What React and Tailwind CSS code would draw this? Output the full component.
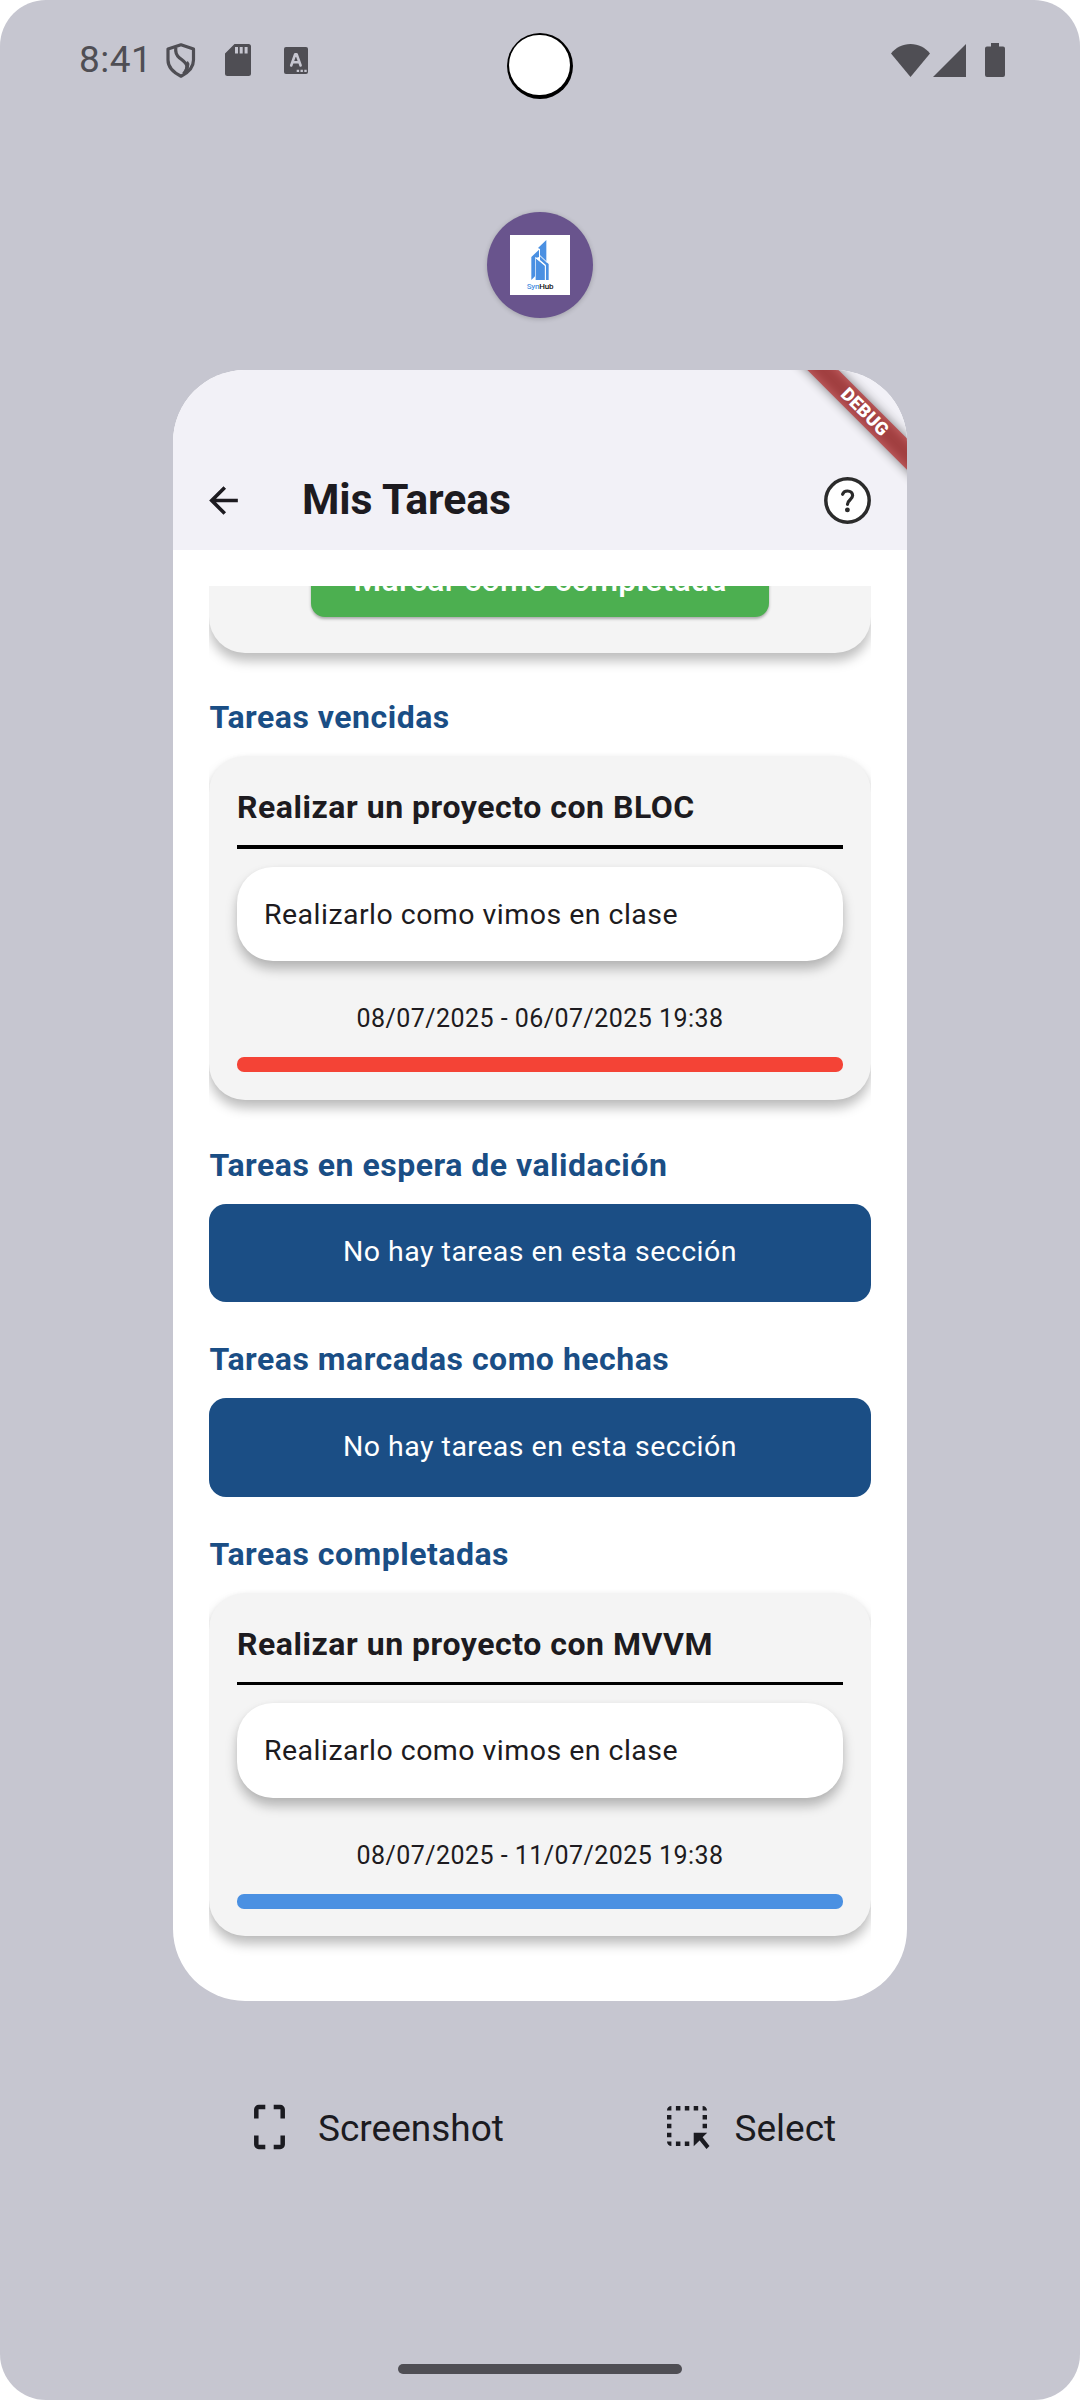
import React from "react";

function ShieldIcon() {
  return (
    <svg className="h-[35px] w-[30px]" viewBox="0 0 30 35" fill="none" stroke="#4f4e54" strokeWidth="3.2" strokeLinejoin="round">
      <path d="M15 1.8 27.5 6v11c0 7.200-6 13-12.500 16.200C8.500 30 2 24.200 2 17V6Z" />
      <path d="M9.800 4.500c-.6 4.500.4 7.600 3.500 10.200 4 3.300 7.500 5 7.700 9 .1 2.300-1.200 4.500-3.500 7" />
      <path d="m21.500 19 1.200 2-1.200 6.500-3 2.500Z" strokeWidth="1.500" fill="#4f4e54" />
    </svg>
  );
}

function SdCardIcon() {
  return (
    <svg className="h-8 w-[26px]" viewBox="0 0 26 32">
      <path d="M9.500 0H23.500A2.500 2.500 0 0 1 26 2.500v27a2.500 2.500 0 0 1-2.500 2.500h-21A2.500 2.500 0 0 1 0 29.500V9.500Z" fill="#4f4e54" />
      <path d="M10 3h3v6.500h-3ZM14.700 3h3v6.500h-3ZM19.600 3h3v6.500h-3Z" fill="#c6c6d0" />
    </svg>
  );
}

function KeyboardLetterIcon() {
  return (
    <svg className="h-[27px] w-6" viewBox="0 0 24 27">
      <rect width="24" height="27" rx="2" fill="#4f4e54" />
      <path d="m7.200 18.500 4-11.200h1.400l4 11.200M8.500 15.300h6.800" fill="none" stroke="#c6c6d0" strokeWidth="2.600" strokeLinecap="round" strokeLinejoin="round" />
      <path d="M12.700 22.700h2.400v2.400h-2.400ZM16.500 22.700h2.400v2.400h-2.400ZM20.300 22.700h2.400v2.400h-2.400Z" fill="#c6c6d0" />
    </svg>
  );
}

function StatusBar() {
  return (
    <header className="relative flex h-[118px] shrink-0 items-center pt-[2px] pr-[75px] pl-[79px]">
      <span className="w-[87px] text-[37px] leading-10 tracking-[0.5px] whitespace-nowrap text-[#4f4e54]">8:41</span>
      <ShieldIcon />
      <div className="ml-[29px] flex">
        <SdCardIcon />
      </div>
      <div className="ml-[33px] flex">
        <KeyboardLetterIcon />
      </div>
      <div className="ml-auto flex items-center">
        <svg className="h-[33px] w-[39px]" viewBox="0 0 39 33" fill="#4f4e54">
          <path d="M0 9.500C5 3.500 11.500 0 19.500 0S34 3.500 39 9.500L19.500 33Z" />
        </svg>
        <svg className="ml-[2px] h-[33px] w-[34px]" viewBox="0 0 34 33" fill="#4f4e54">
          <path d="M34 0v33H1Z" />
        </svg>
        <svg className="ml-[19px] h-[34px] w-5" viewBox="0 0 20 34" fill="#4f4e54">
          <path d="M6 0h8v3.500h4a2 2 0 0 1 2 2V32a2 2 0 0 1-2 2H2a2 2 0 0 1-2-2V5.500a2 2 0 0 1 2-2h4Z" />
        </svg>
      </div>
      <div className="absolute top-[33px] left-[507px] h-[66px] w-[66px] rounded-full bg-black pt-[1.500px] pl-[2px]">
        <div className="h-[60.500px] w-[60.500px] rounded-full bg-white" />
      </div>
    </header>
  );
}

function AppBadge() {
  return (
    <div className="mt-[94px] flex h-[106px] w-[106px] shrink-0 items-center justify-center self-center rounded-full bg-[#69548d] shadow-[0_1px_5px_rgba(0,0,0,0.2)]">
      <div className="flex h-[60px] w-[60px] flex-col items-center bg-white pt-[5px]">
        <svg className="h-[40px] w-[18px] shrink-0" viewBox="0 0 52 120">
          <g fill="#4a90e2">
            <path d="M20 24 45 0v68L26 52V27Z" />
            <path d="M0 51 23 29v22L11 55v54L0 120Z" />
            <path d="M26 50 52 72v48H43V74L26 60Z" />
            <path d="M13 55 41 78v42H13Z" />
          </g>
          <path d="M12 52 42 76v44M25 46 47 67" fill="none" stroke="#fff" strokeWidth="3" />
        </svg>
        <span className="mt-px text-[8px] leading-[12px] font-medium tracking-[-0.200px] text-[#111]">
          <span className="text-[#4a90e2]">Syn</span>Hub
        </span>
      </div>
    </div>
  );
}

function AppBar() {
  return (
    <div className="relative h-[180px] shrink-0 overflow-hidden bg-[#f2f1f7] pt-20">
      <div className="flex h-[100px] items-center pr-9 pl-[29px]">
        <svg className="h-[43px] w-[43px]" viewBox="0 0 24 24" fill="#1d1b20">
          <path d="M20 11.050H7.830l5.590-5.640L12 4l-8 8 8 8 1.410-1.410L7.830 12.950H20Z" />
        </svg>
        <h1 className="ml-[57px] pb-[2px] text-[42.800px] leading-[50px] font-bold tracking-[-0.100px] text-[#1d1b20]">Mis Tareas</h1>
        <svg className="ml-auto h-[47px] w-[47px]" viewBox="0 0 47 47" fill="none" stroke="#2b2b2b">
          <circle cx="23.500" cy="23.500" r="21.700" fill="#fff" strokeWidth="3.500" />
          <path d="M18.600 17.300c.7-2.200 2.600-3.300 4.900-3.300 3 0 5.100 1.900 5.100 4.600 0 4-5.100 4.400-5.100 8.700" strokeWidth="3.200" strokeLinecap="round" />
          <circle cx="23.400" cy="32.900" r="2.400" fill="#2b2b2b" stroke="none" />
        </svg>
      </div>
      <div className="absolute top-[31.200px] right-[-58px] h-[21.600px] w-[200px] rotate-45">
        <div className="absolute inset-0 bg-black/50 blur-[5.500px]" />
        <div className="relative flex h-full items-center justify-center bg-[#b71c1c]/63 text-[18.200px] leading-[21px] font-black tracking-[0.200px] text-white">
          DEBUG
        </div>
      </div>
    </div>
  );
}

function SectionTitle({ children, afterCard = false }) {
  return (
    <h2
      className={
        (afterCard ? "h-[103.600px]" : "h-[96px]") +
        " flex shrink-0 items-end pb-[17px] pl-[0.500px] text-[32px] leading-[44px] font-bold tracking-[0.500px] text-[#1a4e85]"
      }
    >
      {children}
    </h2>
  );
}

function EmptySection() {
  return (
    <div className="flex h-[98.500px] shrink-0 items-center justify-center rounded-[17px] bg-[#1b4e85] text-[28.500px] tracking-[0.480px] text-white">
      No hay tareas en esta sección
    </div>
  );
}

function TaskCard({ title, description, dates, barClass }) {
  return (
    <article className="flex h-[343.700px] shrink-0 flex-col rounded-[36px] bg-[#f4f4f4] px-7 pt-[29px] shadow-[0_8px_12px_rgba(0,0,0,0.26),0_0_4px_rgba(0,0,0,0.03)]">
      <h3 className="text-[32px] leading-[44px] font-bold tracking-[0.530px] text-[#1d1b20]">{title}</h3>
      <div className="mt-[16px] h-[3.500px] shrink-0 bg-black" />
      <div className="mt-[18px] flex h-[94.500px] shrink-0 items-center rounded-[36px] bg-white pt-[2px] pl-[27px] text-[28.500px] tracking-[0.470px] text-[#1d1b20] shadow-[0_8px_12px_rgba(0,0,0,0.26),0_0_4px_rgba(0,0,0,0.03)]">
        {description}
      </div>
      <p className="mt-[42px] text-center text-[25px] leading-8 tracking-[0.450px] text-[#1d1b20]">{dates}</p>
      <div className={"mt-[22px] h-[15px] shrink-0 rounded-[7px] " + barClass} />
    </article>
  );
}

function TaskList() {
  return (
    <div className="mx-9 mt-9 flex grow flex-col overflow-hidden">
      <div className="-mt-[66px] flex h-[132.700px] shrink-0 items-end justify-center rounded-[36px] bg-[#f4f4f4] pb-9 shadow-[0_8px_12px_rgba(0,0,0,0.26)]">
        <div className="flex h-[72.600px] w-[458.500px] items-center justify-center rounded-[14px] bg-[#4caf50] text-[32px] font-medium tracking-[0.270px] text-white shadow-[0_2px_3px_rgba(0,0,0,0.3)]">
          Marcar como completada
        </div>
      </div>
      <SectionTitle afterCard>Tareas vencidas</SectionTitle>
      <TaskCard
        title="Realizar un proyecto con BLOC"
        description="Realizarlo como vimos en clase"
        dates="08/07/2025 - 06/07/2025 19:38"
        barClass="bg-[#f44336]"
      />
      <SectionTitle afterCard>Tareas en espera de validación</SectionTitle>
      <EmptySection />
      <SectionTitle>Tareas marcadas como hechas</SectionTitle>
      <EmptySection />
      <SectionTitle>Tareas completadas</SectionTitle>
      <TaskCard
        title="Realizar un proyecto con MVVM"
        description="Realizarlo como vimos en clase"
        dates="08/07/2025 - 11/07/2025 19:38"
        barClass="bg-[#4a90e2]"
      />
    </div>
  );
}

function ScreenshotIcon() {
  return (
    <svg className="mb-[3px] h-[46px] w-[31px]" viewBox="0 0 31 46" fill="none" stroke="#1b1b21" strokeWidth="4.500">
      <path d="M2.300 14.500V5.500a2.500 2.500 0 0 1 2.500-2.500h6.500M19.700 3h6.500a2.500 2.500 0 0 1 2.500 2.500v9M2.300 31.500v9a2.500 2.500 0 0 0 2.500 2.500h6.500M19.700 43h6.500a2.500 2.500 0 0 0 2.500-2.500v-9" />
    </svg>
  );
}

function SelectIcon() {
  return (
    <svg className="h-[44px] w-11" viewBox="0 0 44 44" fill="#1b1b21">
      <path d="M4.400 0v4.500H0A4.400 4.400 0 0 1 4.400 0ZM8.900 0h4.500v4.500H8.900ZM17.800 0h4.500v4.500h-4.500ZM26.700 0h4.500v4.500h-4.500ZM35.600 0a4.400 4.400 0 0 1 4.400 4.500h-4.400Z" />
      <path d="M0 8.900h4.400v4.500H0ZM35.600 8.900H40v4.500h-4.400ZM0 17.800h4.400v4.500H0ZM35.600 17.800H40v4.500h-4.400ZM0 26.700h4.400v4.500H0Z" />
      <path d="M0 35.600h4.400V40A4.400 4.400 0 0 1 0 35.600ZM8.900 35.600h4.500V40H8.900ZM17.800 35.600h4.500V40h-4.500Z" />
      <path d="M26.700 26.700H40.200l-4.600 4.500 6.900 8.800-3 3-6.900-8.500-5.900 5.700Z" />
    </svg>
  );
}

export default function App() {
  return (
    <div className="h-[2400px] w-[1080px] overflow-hidden bg-white font-['Roboto',sans-serif]">
      <div className="flex h-full flex-col overflow-hidden rounded-[46px] bg-[#c6c6d0]">
        <StatusBar />
        <AppBadge />
        <main className="mt-[52px] flex h-[1631px] w-[734px] shrink-0 flex-col self-center overflow-hidden rounded-[72px] bg-white">
          <AppBar />
          <TaskList />
        </main>
        <div className="mt-[97px] flex h-[60px] shrink-0 items-center pl-[254px] text-[37px] leading-[44px] text-[#1b1b21]">
          <div className="flex w-[412.500px] items-center">
            <ScreenshotIcon />
            <span className="ml-[33px] pt-px">Screenshot</span>
          </div>
          <div className="flex items-center">
            <SelectIcon />
            <span className="ml-[24px] pt-px">Select</span>
          </div>
        </div>
        <div className="mt-[206px] h-[10px] w-[284px] shrink-0 self-center rounded-full bg-[#4f4e54]" />
      </div>
    </div>
  );
}
